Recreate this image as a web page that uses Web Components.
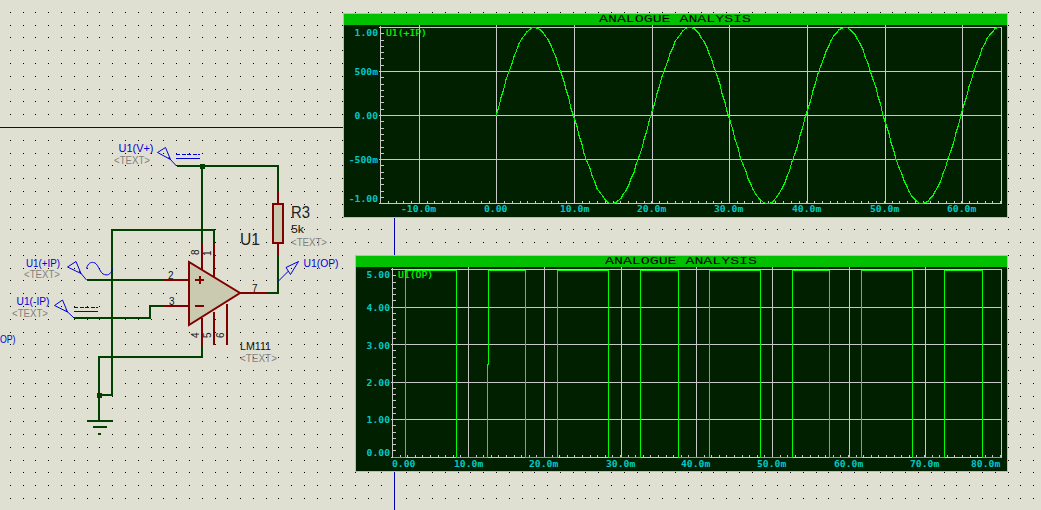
<!DOCTYPE html>
<html>
<head>
<meta charset="utf-8">
<title>Comparator simulation</title>
<style>
  body { margin: 0; background: #e0e0d2; }
</style>
</head>
<body>
<proteus-sheet>
  <schematic-view></schematic-view>
  <graph-window plot="input" left="343" top="13" width="665" height="205">ANALOGUE ANALYSIS</graph-window>
  <graph-window plot="output" left="355" top="255" width="653" height="217">ANALOGUE ANALYSIS</graph-window>
</proteus-sheet>

<script>
class ProteusSheet extends HTMLElement {
  constructor() {
    super();
    this.shadow = this.attachShadow({ mode: 'open' });
  }

  connectedCallback() {
    let dots = '';
    for (let i = 0; i < 82; i++) {
      for (let j = 0; j < 40; j++) {
        dots += `M${Math.floor(10.4 + i * 12.79)} ${Math.floor(12.4 + j * 12.79)}h1v1h-1z`;
      }
    }
    this.shadow.innerHTML = /*html*/`
      <style>
        :host { display: block; position: relative; width: 1041px; height: 510px; overflow: hidden; background: #e0e0d2; }
        svg { position: absolute; left: 0; top: 0; }
      </style>
      <svg width="1041" height="510" shape-rendering="crispEdges"><path d="${dots}" fill="#000"/></svg>
      <slot></slot>
    `;
  }
}

class SchematicView extends HTMLElement {
  constructor() {
    super();
    this.shadow = this.attachShadow({ mode: 'open' });
  }

  connectedCallback() {
    const label = (x, y, len, text, cls) =>
      `<text x="${x}" y="${y}" textLength="${len}" lengthAdjust="spacingAndGlyphs" class="${cls}">${text}</text>`;
    const pinNo = (x, y, text) =>
      `<text x="${x}" y="${y}" class="num" transform="rotate(-90 ${x} ${y})">${text}</text>`;

    this.shadow.innerHTML = /*html*/`
      <style>
        :host { display: block; position: absolute; left: 0; top: 0; width: 1041px; height: 510px; }
        svg { display: block; }
        text { font-family: "Liberation Sans", Arial, sans-serif; font-size: 11px; }
        .blue { fill: #0000d8; }
        .grey { fill: #808080; }
        .black { fill: #111; }
        .big { fill: #222; font-size: 16px; }
        .num { fill: #111; font-size: 10px; }
        .wire { fill: none; stroke: #004000; stroke-width: 2; }
        .pin { fill: none; stroke: #800000; stroke-width: 2; }
        .term { fill: none; stroke: #0000d8; stroke-width: 1; }
      </style>
      <svg width="1041" height="510" viewBox="0 0 1041 510">
        <!-- sheet edge and graph markers -->
        <g shape-rendering="crispEdges" fill="none" stroke="#0000b0">
          <path d="M0 127.5H343"/>
          <path d="M394.5 218V255M394.5 472V510"/>
        </g>

        <!-- wires -->
        <g class="wire" shape-rendering="crispEdges">
          <path d="M177 166H278V191"/>
          <path d="M278 255V293H267"/>
          <path d="M202 166V243"/>
          <path d="M214 243V230H112V395H99"/>
          <path d="M87 280H163"/>
          <path d="M74 318H150V306H163"/>
          <path d="M202 345V357H99V421"/>
          <path d="M87 421H113M93 427H107M98 434H101"/>
        </g>
        <rect x="199.5" y="163.500" width="5" height="5" fill="#004000" shape-rendering="crispEdges"/>
        <rect x="96.500" y="392.500" width="5" height="5" fill="#004000" shape-rendering="crispEdges"/>

        <!-- resistor -->
        <g shape-rendering="crispEdges">
          <path class="pin" d="M278 191V204M278 243V255"/>
          <rect x="273" y="204" width="10" height="39" fill="#cacab0" stroke="#800000" stroke-width="2"/>
        </g>

        <!-- op amp pins, body and signs -->
        <g shape-rendering="crispEdges">
          <path class="pin" d="M163 280H189M163 306H189M240 293H267"/>
          <path class="pin" d="M202 243V272M214 243V278M202 345V318M214 345V312M227 345V304"/>
        </g>
        <path d="M189 262V325L240 293Z" fill="#cacab0" stroke="#800000" stroke-width="2"/>
        <path class="pin" shape-rendering="crispEdges" d="M195 280H204M199.500 276V284M195 306H204"/>

        <!-- terminals -->
        <g class="term">
          <path d="M157.500 152.500L165.500 147.500L170.500 159.500ZM168.500 157.500L176.500 166"/>
          <path shape-rendering="crispEdges" stroke-dasharray="4 1.500" d="M176 154.500H200"/>
          <path shape-rendering="crispEdges" d="M176 158.500H200"/>
          <path d="M67.500 267L76 261.500L81 273.500ZM79 271L86.500 280"/>
          <path d="M86.500 268.500C88 263 91 262 93.500 262.500C98 263 99 271 103 274C107 276 111 275 112.500 268.500"/>
          <path d="M54.500 305.500L62.500 300L67.500 312ZM65.500 310L74 318"/>
          <path shape-rendering="crispEdges" stroke-dasharray="4 1.500" d="M74 307.500H98"/>
          <path shape-rendering="crispEdges" d="M74 311.500H98"/>
          <path d="M298.500 261.500L286 267.500L290.500 274.500ZM288.500 271L278.500 281"/>
        </g>

        <!-- labels -->
        ${label(118.5, 152, 35, 'U1(V+)', 'blue')}
        ${label(114, 164, 36, '&lt;TEXT&gt;', 'grey')}
        ${label(26, 267, 34, 'U1(+IP)', 'blue')}
        ${label(24, 278, 36, '&lt;TEXT&gt;', 'grey')}
        ${label(16.5, 305, 33, 'U1(-IP)', 'blue')}
        ${label(12, 317, 36, '&lt;TEXT&gt;', 'grey')}
        ${label(0, 343, 15.5, 'OP)', 'blue')}
        ${label(303.5, 267, 35, 'U1(OP)', 'blue')}
        ${label(240, 350, 31, 'LM111', 'black')}
        ${label(240, 362, 37, '&lt;TEXT&gt;', 'grey')}
        ${label(291, 233, 13, '5k', 'black')}
        ${label(291, 246, 36, '&lt;TEXT&gt;', 'grey')}
        ${label(240, 245, 20, 'U1', 'big')}
        ${label(291, 218, 19, 'R3', 'big')}
        <text x="168" y="279" class="num">2</text>
        <text x="169" y="305" class="num">3</text>
        <text x="252" y="292" class="num">7</text>
        ${pinNo(199, 255, '8')}
        ${pinNo(211, 256, '1')}
        ${pinNo(199, 338, '4')}
        ${pinNo(211, 338, '5')}
        ${pinNo(224, 338, '6')}
      </svg>
    `;
  }
}

const PLOTS = {
  input: {
    axisX: 380, right: 1001,
    rows: [27, 71, 115, 159, 203],
    cols: [419, 496, 574, 652, 729, 807, 885, 962],
    xStep: 7.75, yStep: 6.29,
    yLabels: [[378, 36, '1.00'], [378, 75, '500m'], [378, 119, '0.00'], [378, 163, '-500m'], [378, 202, '-1.00']],
    xLabels: [[401, '-10.0m'], [484, '0.00'], [560, '10.0m'], [637, '20.0m'], [714, '30.0m'], [792, '40.0m'], [870, '50.0m'], [947, '60.0m']],
    xLabelY: 212,
    name: [386, 36, 'U1(+IP)'],
    trace() {
      const pts = [];
      for (let x = 496; x <= 1001; x += 2.6) {
        const y = 115 - 88 * Math.sin((x - 496) / 155 * 2 * Math.PI);
        pts.push(Math.round(x) + ',' + (Math.round(y) + 0.5));
      }
      return pts.join(' ');
    }
  },
  output: {
    axisX: 392, right: 1001,
    rows: [269, 307, 344, 382, 419, 457],
    cols: [468, 544, 621, 696, 772, 849, 925],
    xStep: 7.6, yStep: 6.25,
    yLabels: [[390, 278, '5.00'], [390, 311, '4.00'], [390, 349, '3.00'], [390, 386, '2.00'], [390, 423, '1.00'], [390, 456, '0.00']],
    xLabels: [[392, '0.00'], [454, '10.0m'], [529, '20.0m'], [606, '30.0m'], [681, '40.0m'], [757, '50.0m'], [834, '60.0m'], [910, '70.0m'], [971, '80.0m']],
    xLabelY: 467,
    name: [398, 278, 'U1(OP)'],
    trace() {
      const hi = 270.5, lo = 457.5;
      const pulses = [[405, 456], [488, 525], [557, 608], [640, 678], [709, 760], [792, 829], [861, 912], [944, 982]];
      let pts = `393,${lo}`;
      for (const [up, down] of pulses) {
        if (up === 488) pts += ` 487.500,${lo} 487.500,364.500 488.500,364.500 488.500,${hi}`;
        else pts += ` ${up + 0.5},${lo} ${up + 0.5},${hi}`;
        pts += ` ${down + 0.5},${hi} ${down + 0.5},${lo}`;
      }
      return pts + ` 1001,${lo}`;
    }
  }
};

class GraphWindow extends HTMLElement {
  constructor() {
    super();
    this.shadow = this.attachShadow({ mode: 'open' });
  }

  connectedCallback() {
    const p = PLOTS[this.getAttribute('plot')];
    const left = +this.getAttribute('left');
    const top = +this.getAttribute('top');
    const width = +this.getAttribute('width');
    const height = +this.getAttribute('height');
    this.style.left = left + 'px';
    this.style.top = top + 'px';
    this.style.width = width + 'px';
    this.style.height = height + 'px';

    const bodyW = width - 2;
    const bodyH = height - 13;
    const first = p.rows[0], last = p.rows[p.rows.length - 1];

    // grid, axes and ticks all in page coordinates
    let grid = '';
    for (const y of p.rows) grid += `M${p.axisX - 1} ${y + 0.5}H${p.right + 1}`;
    for (const x of p.cols) grid += `M${x + 0.5} ${first - 2}V${last}`;
    grid += `M${p.axisX + 0.5} ${first - 1}V${last + 1}M${p.right + 0.5} ${first}V${last}`;
    for (let y = first; y < last; y += p.yStep) grid += `M${p.axisX} ${Math.round(y) + 0.5}h4`;
    for (let x = p.axisX; x < p.right; x += p.xStep) grid += `M${Math.round(x) + 0.5} ${last - 2}v3`;

    const small = (x, y, text, cls) =>
      `<text x="${x}" y="${y}" class="${cls}" textLength="${text.length * 5.85}" lengthAdjust="spacingAndGlyphs">${text}</text>`;
    const yText = p.yLabels.map(([r, y, t]) => small(r - t.length * 5.85, y, t, 'scale')).join('');
    const xText = p.xLabels.map(([x, t]) => small(x, p.xLabelY, t, 'scale')).join('');

    this.shadow.innerHTML = /*html*/`
      <style>
        :host { display: flex; flex-direction: column; position: absolute; box-sizing: border-box; border: 1px solid #bcbcb4; background: #002000; }
        .title { flex: 0 0 11px; display: flex; align-items: center; justify-content: center; background: #00c000; overflow: hidden; }
        .title span { display: block; color: #000; font: 10px/11px "Liberation Mono", monospace; transform: scaleX(1.49); white-space: nowrap; }
        svg { display: block; flex: 1; }
        text { font-family: "DejaVu Sans Mono", monospace; font-size: 9.500px; font-weight: bold; }
        .scale { fill: #00c8c8; }
        .name { fill: #00ff00; font-weight: normal; stroke: #00ff00; stroke-width: 0.2; }
      </style>
      <div class="title"><span><slot></slot></span></div>
      <svg width="${bodyW}" height="${bodyH}" viewBox="${left + 1} ${top + 12} ${bodyW} ${bodyH}">
        <path d="${grid}" fill="none" stroke="#c8c8c8" shape-rendering="crispEdges"/>
        <polyline points="${p.trace()}" fill="none" stroke="#00ff00" shape-rendering="crispEdges"/>
        ${yText}${xText}
        ${small(p.name[0], p.name[1], p.name[2], 'name')}
      </svg>
    `;
  }
}

customElements.define('proteus-sheet', ProteusSheet);
customElements.define('schematic-view', SchematicView);
customElements.define('graph-window', GraphWindow);
</script>
</body>
</html>
